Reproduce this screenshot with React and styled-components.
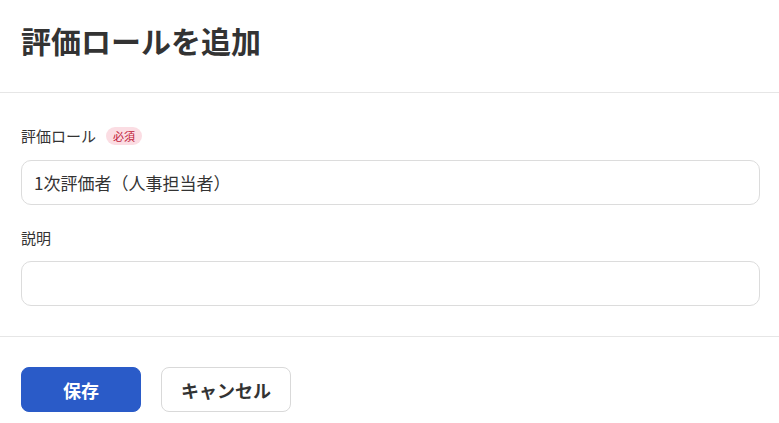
import styled, { createGlobalStyle } from "styled-components";

const GlobalStyle = createGlobalStyle`
  * { box-sizing: border-box; }
  body {
    margin: 0;
    background: #ffffff;
    font-family: "Noto Sans CJK JP", "Noto Sans", sans-serif;
    color: #333333;
  }
`;

const Header = styled.header`
  height: 93px;
  padding: 22px 21px 0;
  border-bottom: 1px solid #e6e6e6;
`;

const Title = styled.h1`
  margin: 0;
  font-size: 30px;
  line-height: 36px;
  font-weight: 700;
  color: #333333;
`;

const Body = styled.div`
  display: flex;
  flex-direction: column;
  gap: 23px;
  padding: 33px 19px 30px 21px;
  border-bottom: 1px solid #e6e6e6;
`;

const Field = styled.div`
  display: flex;
  flex-direction: column;
  gap: ${(p) => p.$gap || 14}px;
`;

const Label = styled.label`
  display: flex;
  align-items: center;
  gap: 10px;
  font-size: 15px;
  line-height: 20px;
  color: #333333;
`;

const Badge = styled.span`
  display: inline-flex;
  align-items: center;
  height: 18px;
  padding: 0 7px;
  border-radius: 9px;
  background: #fbdde3;
  color: #c01838;
  font-size: 11px;
  line-height: 18px;
`;

const Input = styled.input`
  width: 100%;
  height: 45px;
  padding: 0 12px;
  border: 1px solid #dcdcdc;
  border-radius: 10px;
  background: #ffffff;
  font-family: inherit;
  font-size: 17px;
  color: #333333;
  outline: none;
`;

const Footer = styled.footer`
  display: flex;
  gap: 20px;
  padding: 30px 21px 12px;
`;

const Button = styled.button`
  height: 45px;
  width: ${(p) => p.$width}px;
  border-radius: 8px;
  font-family: inherit;
  font-size: 18px;
  font-weight: 700;
  cursor: pointer;
  border: 1px solid ${(p) => (p.$primary ? "#2a5bc8" : "#d9d9d9")};
  background: ${(p) => (p.$primary ? "#2a5bc8" : "#ffffff")};
  color: ${(p) => (p.$primary ? "#ffffff" : "#333333")};
`;

export default function App() {
  return (
    <>
      <GlobalStyle />
      <Header>
        <Title>評価ロールを追加</Title>
      </Header>
      <Body>
        <Field>
          <Label>
            評価ロール
            <Badge>必須</Badge>
          </Label>
          <Input defaultValue="1次評価者（人事担当者）" />
        </Field>
        <Field $gap={13}>
          <Label>説明</Label>
          <Input defaultValue="" />
        </Field>
      </Body>
      <Footer>
        <Button $primary $width={120}>保存</Button>
        <Button $width={130}>キャンセル</Button>
      </Footer>
    </>
  );
}
